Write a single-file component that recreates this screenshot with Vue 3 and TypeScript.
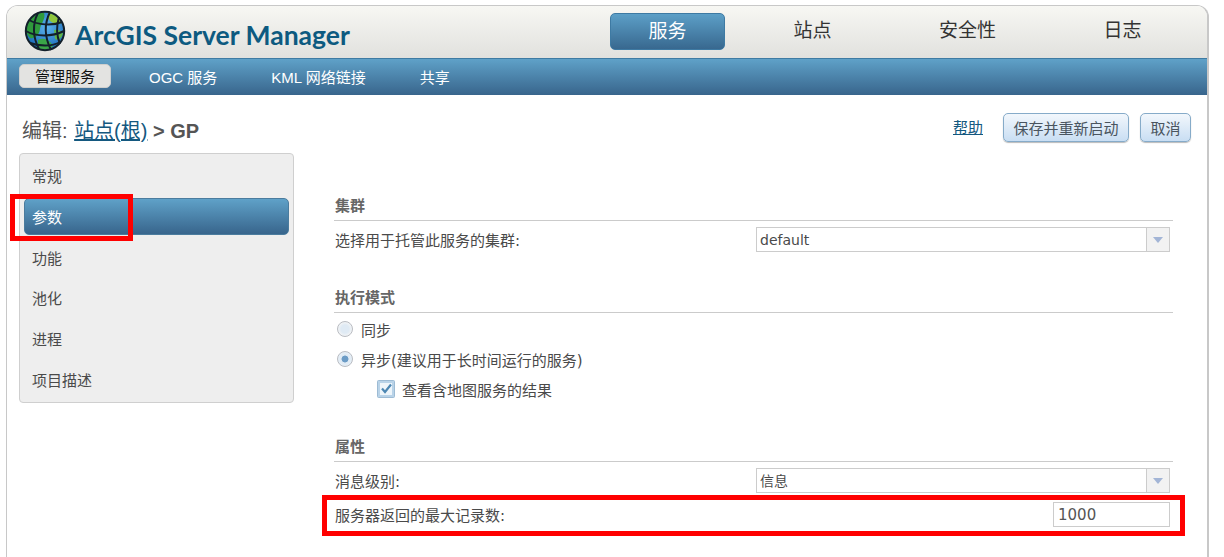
<template>
  <div class="page">
    <div class="frame">
      <header class="topbar">
        <div class="brand">
          <svg class="globe" width="42" height="42" viewBox="0 0 42 42">
            <defs>
              <radialGradient id="sea" cx="0.55" cy="0.4" r="0.65">
                <stop offset="0" stop-color="#5db4ee" />
                <stop offset="1" stop-color="#1565b5" />
              </radialGradient>
              <clipPath id="ball"><circle cx="21" cy="21" r="19" /></clipPath>
            </defs>
            <circle cx="21" cy="21" r="19" fill="url(#sea)" />
            <g clip-path="url(#ball)">
              <path d="M2 14 C6 6 14 2 20 3 C22 9 17 13 16 19 C15 26 10 29 6 28 C3 25 1 20 2 14Z" fill="#2f9a3c" />
              <path d="M24 3 C30 4 36 8 38 13 C33 15 28 13 25 10Z" fill="#8fc63f" />
              <path d="M14 30 C20 27 26 30 29 36 C25 41 18 41 14 39Z" fill="#3aa648" />
              <path d="M30 20 C34 19 38 21 39 24 C37 29 34 31 31 29Z" fill="#5fb548" />
            </g>
            <g fill="none" stroke="#13202b" stroke-width="2">
              <circle cx="21" cy="21" r="19.2" />
              <path d="M5 10 C14 15 28 16 38 12" />
              <path d="M2 21 C12 27 28 27 40 21" />
              <path d="M6 33 C14 36 28 37 36 32" />
              <path d="M14 3 C8 14 9 28 15 39" />
              <path d="M26 2 C20 14 21 28 27 40" />
              <path d="M35 7 C32 17 33 27 36 34" />
            </g>
          </svg>
          <span class="brand-name">ArcGIS Server Manager</span>
        </div>
        <nav class="mainnav">
          <a v-for="n in mainNav" :key="n.label" class="mainitem" :class="{ on: n.on }">{{ n.label }}</a>
        </nav>
      </header>

      <div class="subbar">
        <a v-for="s in subNav" :key="s.label" class="subitem" :class="{ on: s.on }">{{ s.label }}</a>
      </div>

      <div class="titlerow">
        <h1 class="crumb">编辑: <a class="crumb-link">站点(根)</a> <b>&gt; GP</b></h1>
        <div class="actions">
          <a class="help">帮助</a>
          <button class="btn">保存并重新启动</button>
          <button class="btn cancel">取消</button>
        </div>
      </div>

      <div class="content">
        <aside class="side">
          <div v-for="m in sideItems" :key="m" class="sideitem" :class="{ on: m === '参数' }">{{ m }}</div>
        </aside>

        <main class="form">
          <section class="block first">
            <h2 class="head">集群</h2>
            <div class="row">
              <label>选择用于托管此服务的集群:</label>
              <div class="select">
                <span>default</span>
                <i class="arrow"><b></b></i>
              </div>
            </div>
          </section>

          <section class="block mode">
            <h2 class="head">执行模式</h2>
            <div class="radio"><i class="dot"></i>同步</div>
            <div class="radio second"><i class="dot checked"></i>异步(建议用于长时间运行的服务)</div>
            <div class="check">
              <svg width="18" height="18" viewBox="0 0 18 18">
                <rect x="0.5" y="0.5" width="17" height="17" rx="1" fill="#b9d3e8" stroke="#9dbbd4" />
                <rect x="3" y="3" width="12" height="12" fill="#eef5fa" />
                <path d="M5 8.5 L8 12 L14 4.5" fill="none" stroke="#4d87b3" stroke-width="2.2" />
              </svg>
              查看含地图服务的结果
            </div>
          </section>

          <section class="block props">
            <h2 class="head">属性</h2>
            <div class="row">
              <label>消息级别:</label>
              <div class="select">
                <span class="cjk">信息</span>
                <i class="arrow"><b></b></i>
              </div>
            </div>
            <div class="row maxrow">
              <label>服务器返回的最大记录数:</label>
              <input class="num" value="1000" />
            </div>
          </section>
        </main>
      </div>
    </div>

    <div class="mark mark-side"></div>
    <div class="mark mark-row"></div>
  </div>
</template>

<script setup lang="ts">
interface NavItem {
  label: string
  on?: boolean
}

const mainNav: NavItem[] = [
  { label: '服务', on: true },
  { label: '站点' },
  { label: '安全性' },
  { label: '日志' },
]

const subNav: NavItem[] = [
  { label: '管理服务', on: true },
  { label: 'OGC 服务' },
  { label: 'KML 网络链接' },
  { label: '共享' },
]

const sideItems = ['常规', '参数', '功能', '池化', '进程', '项目描述']
</script>

<style>
html, body {
  margin: 0;
  background: #fff;
  overflow: hidden;
}
</style>

<style scoped>
.page {
  position: relative;
  width: 1224px;
  height: 557px;
  overflow: hidden;
  padding: 5px 0 0 6px;
  box-sizing: border-box;
  font-family: "Liberation Sans", "Noto Sans CJK SC", sans-serif;
  font-size: 15px;
  color: #4a4a4a;
}

.frame {
  width: 1203px;
  height: 560px;
  box-sizing: border-box;
  border: 1px solid #c8c8c8;
  border-width: 1px 2px 0 1px;
  border-radius: 12px 12px 0 0;
  overflow: hidden;
}

.topbar {
  height: 52px;
  display: flex;
  background: linear-gradient(#f7f7f3, #e1e1de);
}

.brand {
  width: 603px;
  display: flex;
  align-items: center;
  padding-left: 17px;
  box-sizing: border-box;
  gap: 9px;
}

.globe {
  margin-top: -2px;
  flex: none;
}

.brand-name {
  font-family: "Lato", sans-serif;
  font-weight: 700;
  font-size: 26.5px;
  color: #0d5a80;
  margin-top: 6px;
  white-space: nowrap;
}

.mainnav {
  display: flex;
  padding-top: 7px;
}

.mainitem {
  width: 115px;
  height: 37px;
  line-height: 35px;
  text-align: center;
  font-size: 19px;
  color: #333;
  border-radius: 5px;
  box-sizing: border-box;
}

.mainitem:nth-child(2) {
  margin-left: 30px;
}

.mainitem:nth-child(3),
.mainitem:nth-child(4) {
  margin-left: 40px;
}

.mainitem.on {
  color: #fff;
  border: 1px solid #3e7aa3;
  background: linear-gradient(#5c9fc7, #38688f);
}

.subbar {
  height: 37px;
  display: flex;
  align-items: center;
  padding: 0 0 2px 12px;
  background: linear-gradient(#5fa1c8, #38658c);
  border-top: 1px solid #3f7ba3;
  box-sizing: border-box;
}

.subitem {
  color: #fff;
  white-space: nowrap;
  margin-right: 54px;
}

.subitem:nth-child(2) {
  margin-left: -16px;
}

.subitem.on {
  width: 92px;
  height: 24px;
  line-height: 23px;
  text-align: center;
  color: #111;
  background: #e3e3e1;
  border: 1px solid #cfcfcd;
  border-radius: 5px;
  box-sizing: border-box;
}

.titlerow {
  height: 58px;
  display: flex;
  justify-content: space-between;
  padding: 18px 16px 0 15px;
  box-sizing: border-box;
}

.crumb {
  margin: 2px 0 0;
  font-size: 20px;
  font-weight: 400;
  color: #555;
  white-space: nowrap;
}

.crumb b {
  font-weight: 700;
}

.crumb-link {
  color: #14587f;
  text-decoration: underline;
  margin-left: 1px;
}

.actions {
  display: flex;
  align-items: flex-start;
}

.help {
  color: #14587f;
  text-decoration: underline;
  margin: 3px 20px 0 0;
}

.btn {
  height: 29px;
  width: 126px;
  padding: 0;
  font: inherit;
  color: #4a5560;
  border: 1px solid #86abc9;
  border-radius: 5px;
  background: linear-gradient(#f2f7fc, #c9def3);
  box-shadow: 0 1px 1px #bbb;
}

.cancel {
  width: 51px;
  margin-left: 11px;
}

.content {
  display: flex;
  padding-left: 12px;
}

.side {
  width: 275px;
  height: 250px;
  box-sizing: border-box;
  padding: 3px 4px;
  background: #eeeeee;
  border: 1px solid #cfcfcf;
  border-radius: 4px;
  flex: none;
}

.sideitem {
  height: 37px;
  line-height: 39px;
  padding-left: 8px;
  margin-bottom: 3.8px;
  border-radius: 5px;
}

.sideitem.on {
  color: #fff;
  background: linear-gradient(#5fa1c8, #38658c);
  border: 1px solid #4b7c9e;
  box-sizing: border-box;
  line-height: 37px;
  padding-left: 7px;
}

.form {
  width: 839px;
  margin-left: 40px;
  font-family: "DejaVu Sans", "Noto Sans CJK SC", sans-serif;
}

.head {
  margin: 0;
  height: 24px;
  line-height: 19px;
  padding-left: 1px;
  font-size: 15px;
  font-weight: 700;
  color: #666;
  border-bottom: 1px solid #cbcbcb;
  box-sizing: border-box;
}

.block.first {
  padding-top: 44px;
}

.block.mode {
  margin-top: 37px;
}

.block.props {
  margin-top: 39px;
}

.row {
  display: flex;
  align-items: center;
  justify-content: space-between;
  height: 25px;
  margin-top: 6px;
  padding: 0 3px 0 1px;
}

.select {
  width: 414px;
  height: 25px;
  box-sizing: border-box;
  border: 1px solid #cccccc;
  display: flex;
  align-items: center;
  justify-content: space-between;
  padding-left: 3px;
  font-size: 14px;
}

.select .cjk {
  font-size: 14px;
  margin-top: -2px;
}

.arrow {
  width: 23px;
  height: 23px;
  border-left: 1px solid #cccccc;
  background: #f2f2f2;
  display: flex;
  align-items: center;
  justify-content: center;
  box-sizing: border-box;
}

.arrow b {
  width: 0;
  height: 0;
  border: 5px solid transparent;
  border-top: 6px solid #a3b5d6;
  border-bottom: 0;
}

.radio {
  display: flex;
  align-items: center;
  height: 20px;
  margin-top: 6px;
  gap: 8px;
}

.radio.second {
  margin-top: 10px;
}

.dot {
  width: 16px;
  height: 16px;
  margin-left: 3px;
  border-radius: 50%;
  box-sizing: border-box;
  border: 1px solid #b9bcc2;
  background: radial-gradient(circle, #dfeaf4 40%, #f6f6f6 75%);
}

.dot.checked {
  background: radial-gradient(circle, #6c9cc6 32%, #dfeaf4 38%, #e6eff7 70%, #d3d9e0 100%);
}

.check {
  display: flex;
  align-items: center;
  height: 20px;
  margin: 10px 0 0 43px;
  gap: 7px;
}

.maxrow {
  margin-top: 9px;
}

.num {
  width: 117px;
  height: 25px;
  box-sizing: border-box;
  border: 1px solid #cccccc;
  padding: 0 4px;
  font-family: "DejaVu Sans", sans-serif;
  font-size: 15px;
  color: #555;
  outline: none;
}

.mark {
  position: absolute;
  box-sizing: border-box;
  border: 5px solid #ff0000;
  pointer-events: none;
}

.mark-side {
  left: 10px;
  top: 194px;
  width: 123px;
  height: 47px;
}

.mark-row {
  left: 322px;
  top: 495px;
  width: 863px;
  height: 41px;
}
</style>
